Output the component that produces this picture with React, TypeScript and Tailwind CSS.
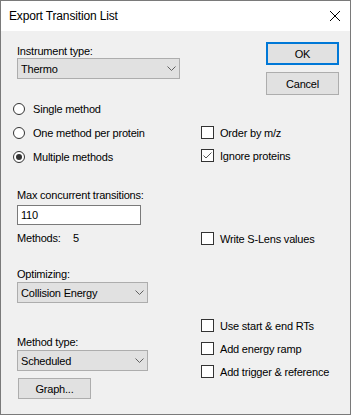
import React from "react";

function Chevron() {
  return (
    <svg width="9" height="5" viewBox="0 0 9 5" className="shrink-0">
      <path d="M0.5 0.5 L4.5 4.5 L8.5 0.5" fill="none" stroke="#606060" strokeWidth="1" />
    </svg>
  );
}

function Combo({ value, width }: { value: string; width: string }) {
  return (
    <div
      className={`flex h-[21px] items-center justify-between border border-[#adadad] bg-[#e1e1e1] pl-[3px] pr-[3px] ${width}`}
    >
      <span>{value}</span>
      <Chevron />
    </div>
  );
}

function Radio({ label, checked }: { label: string; checked?: boolean }) {
  return (
    <div className="flex h-[24px] items-center gap-[8px]">
      <div className="flex h-[12px] w-[12px] items-center justify-center rounded-full border border-[#333333] bg-white">
        {checked && <div className="h-[6px] w-[6px] rounded-full bg-[#333333]" />}
      </div>
      <span>{label}</span>
    </div>
  );
}

function Check({ label, checked }: { label: string; checked?: boolean }) {
  return (
    <div className="flex h-[23px] items-center gap-[6px]">
      <div className="flex h-[13px] w-[13px] items-center justify-center border border-[#333333] bg-white">
        {checked && (
          <svg width="11" height="11" viewBox="0 0 11 11">
            <path d="M1.5 5.5 L4 8 L9.5 2.5" fill="none" stroke="#555555" strokeWidth="1" />
          </svg>
        )}
      </div>
      <span>{label}</span>
    </div>
  );
}

function Button({ label, primary, className }: { label: string; primary?: boolean; className?: string }) {
  return (
    <div
      className={`flex items-center justify-center bg-[#e1e1e1] ${
        primary ? "border-2 border-[#0078d7]" : "border border-[#adadad]"
      } ${className ?? ""}`}
    >
      {label}
    </div>
  );
}

export default function App() {
  return (
    <div className="flex h-[415px] w-[351px] flex-col border border-[#7a7a7a] bg-[#f0f0f0] font-['Liberation_Sans',Arial,sans-serif] text-[11px] leading-[14px] tracking-[-0.2px] text-black">
      {/* title bar */}
      <div className="flex h-[30px] items-center justify-between bg-white pl-[8px] pr-[10px]">
        <span className="text-[12px] tracking-[-0.15px]">Export Transition List</span>
        <svg width="10" height="10" viewBox="0 0 10 10">
          <path d="M0 0 L10 10 M10 0 L0 10" stroke="#000" strokeWidth="1" />
        </svg>
      </div>

      <div className="flex flex-1">
        {/* left column */}
        <div className="flex w-[188px] flex-col pl-[12px]">
          <div className="ml-[4px] mt-[13px] h-[14px]">Instrument type:</div>
          <div className="ml-[4px]">
            <Combo value="Thermo" width="w-[163px]" />
          </div>

          <div className="mt-[18px] flex flex-col">
            <Radio label="Single method" />
            <Radio label="One method per protein" />
            <Radio label="Multiple methods" checked />
          </div>

          <div className="ml-[4px] mt-[19px] h-[14px]">Max concurrent transitions:</div>
          <div className="ml-[4px] mt-[3px] flex h-[20px] w-[124px] items-center border border-[#7a7a7a] bg-white pl-[3px]">
            110
          </div>
          <div className="ml-[4px] mt-[6px] flex h-[14px]">
            <span className="w-[56px]">Methods:</span>
            <span>5</span>
          </div>

          <div className="ml-[4px] mt-[22px] h-[14px]">Optimizing:</div>
          <div className="ml-[4px] mt-[1px]">
            <Combo value="Collision Energy" width="w-[131px]" />
          </div>

          <div className="ml-[4px] mt-[32px] h-[14px]">Method type:</div>
          <div className="ml-[4px] mt-[1px]">
            <Combo value="Scheduled" width="w-[131px]" />
          </div>

          <Button label="Graph..." className="ml-[5px] mt-[7px] h-[21px] w-[73px]" />
        </div>

        {/* right column */}
        <div className="flex flex-1 flex-col pl-[12px] pr-[11px]">
          <div className="flex flex-col items-end">
            <Button label="OK" primary className="mt-[11px] h-[23px] w-[73px]" />
            <Button label="Cancel" className="mt-[7px] h-[23px] w-[73px]" />
          </div>

          <div className="mt-[26px] flex flex-col">
            <Check label="Order by m/z" />
            <Check label="Ignore proteins" checked />
          </div>

          <div className="mt-[60px]">
            <Check label="Write S-Lens values" />
          </div>

          <div className="mt-[64px] flex flex-col">
            <Check label="Use start & end RTs" />
            <Check label="Add energy ramp" />
            <Check label="Add trigger & reference" />
          </div>
        </div>
      </div>
    </div>
  );
}
